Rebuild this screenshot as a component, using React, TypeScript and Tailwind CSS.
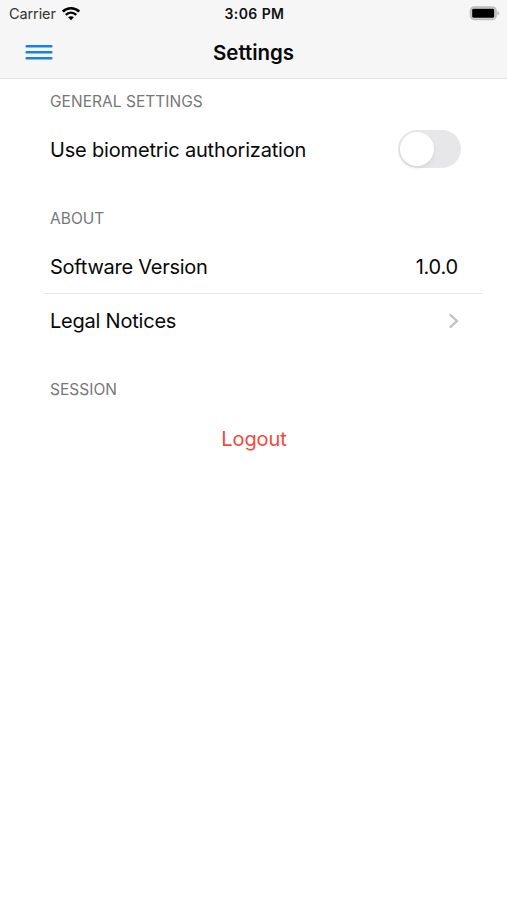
import type { ReactNode } from "react";

interface SectionProps {
  title: string;
  children: ReactNode;
}

function StatusBar() {
  return (
    <div className="grid h-[27px] grid-cols-3 items-center pl-[9px] pr-[7px] text-[#111]">
      <div className="flex items-center gap-[6px]">
        <span className="text-[14.5px] tracking-[-0.1px] text-[#333]">
          Carrier
        </span>
        <svg width="18" height="14" viewBox="0 0 18 14" fill="none" stroke="#000">
          <path d="M0.8 4.6C5.3 0.2 12.7 0.2 17.2 4.6" strokeWidth="2.6" />
          <path d="M3.8 7.8C6.8 4.9 11.2 4.9 14.2 7.8" strokeWidth="2.4" />
          <path
            d="M9 13.2L6.1 10.3C7.7 8.8 10.3 8.8 11.9 10.3Z"
            fill="#000"
            stroke="none"
          />
        </svg>
      </div>
      <span className="pb-px text-center text-[14px] font-semibold tracking-[0.4px]">
        3:06 PM
      </span>
      <svg
        className="justify-self-end"
        width="31"
        height="15"
        viewBox="0 0 31 15"
      >
        <rect
          x="1.6"
          y="1.1"
          width="25.4"
          height="12.2"
          rx="3.6"
          fill="#d9d9d9"
          stroke="#bdbdbd"
          strokeWidth="1.7"
        />
        <rect x="3.2" y="2.8" width="22" height="8.9" rx="1.4" fill="#000" />
        <path d="M28.4 5C31 6 31 8.4 28.4 9.4Z" fill="#bdbdbd" />
      </svg>
    </div>
  );
}

function NavBar() {
  return (
    <div className="grid h-[50px] grid-cols-3 items-center px-[25px]">
      <button className="w-[28px]" aria-label="Menu">
        <svg width="28" height="16" viewBox="0 0 28 16" fill="#1880ee">
          <rect x="0.5" y="1" width="27" height="2.4" rx="1" />
          <rect x="0.5" y="7" width="27" height="2.4" rx="1" />
          <rect x="0.5" y="13" width="27" height="2.4" rx="1" />
        </svg>
      </button>
      <h1 className="pt-[2px] text-center text-[20.5px] font-semibold tracking-[-0.05px] text-[#080808]">
        Settings
      </h1>
    </div>
  );
}

function Section({ title, children }: SectionProps) {
  return (
    <section>
      <h2 className="flex h-[43px] items-center pl-[50px] text-[15.5px] tracking-[0.03px] text-[#777]">
        {title}
      </h2>
      {children}
    </section>
  );
}

function Row({ children }: { children: ReactNode }) {
  return (
    <div className="flex h-[54px] items-center justify-between pl-[50px] pr-[46px] text-[20px]">
      {children}
    </div>
  );
}

export default function App() {
  return (
    <div className="h-[900px] w-[507px] overflow-hidden bg-white font-['Inter',sans-serif] text-[#080808]">
      <header className="h-[79px] border-b border-[#e2e2e2] bg-[#f6f6f6]">
        <StatusBar />
        <NavBar />
      </header>

      <main className="flex flex-col gap-5 pt-px">
        <Section title="GENERAL SETTINGS">
          <Row>
            <span className="tracking-[-0.17px]">Use biometric authorization</span>
            <button
              role="switch"
              aria-checked={false}
              aria-label="Use biometric authorization"
              className="mb-[2px] flex h-[38px] w-[63px] items-center rounded-full bg-[#e7e7e9] px-[2px]"
            >
              <span className="size-[34px] rounded-full bg-white shadow-[0_2px_4px_rgba(0,0,0,0.08)]" />
            </button>
          </Row>
        </Section>

        <Section title="ABOUT">
          <Row>
            <span className="tracking-[-0.25px]">Software Version</span>
            <span className="pr-[3px] tracking-[-0.2px]">1.0.0</span>
          </Row>
          <div className="-mt-px ml-[44px] mr-[24px] h-px bg-[#e8e8e8]" />
          <Row>
            <span className="tracking-[-0.22px]">Legal Notices</span>
            <svg
              className="mr-px"
              width="12"
              height="16"
              viewBox="0 0 12 16"
              fill="none"
              stroke="#c4c4c6"
              strokeWidth="2.4"
            >
              <path d="M1.8 1.3L8.9 8L1.8 14.7" />
            </svg>
          </Row>
        </Section>

        <Section title="SESSION">
          <Row>
            <button className="mx-auto pr-[3px] pt-px tracking-[-0.1px] text-[#f4483d]">
              Logout
            </button>
          </Row>
        </Section>
      </main>
    </div>
  );
}
